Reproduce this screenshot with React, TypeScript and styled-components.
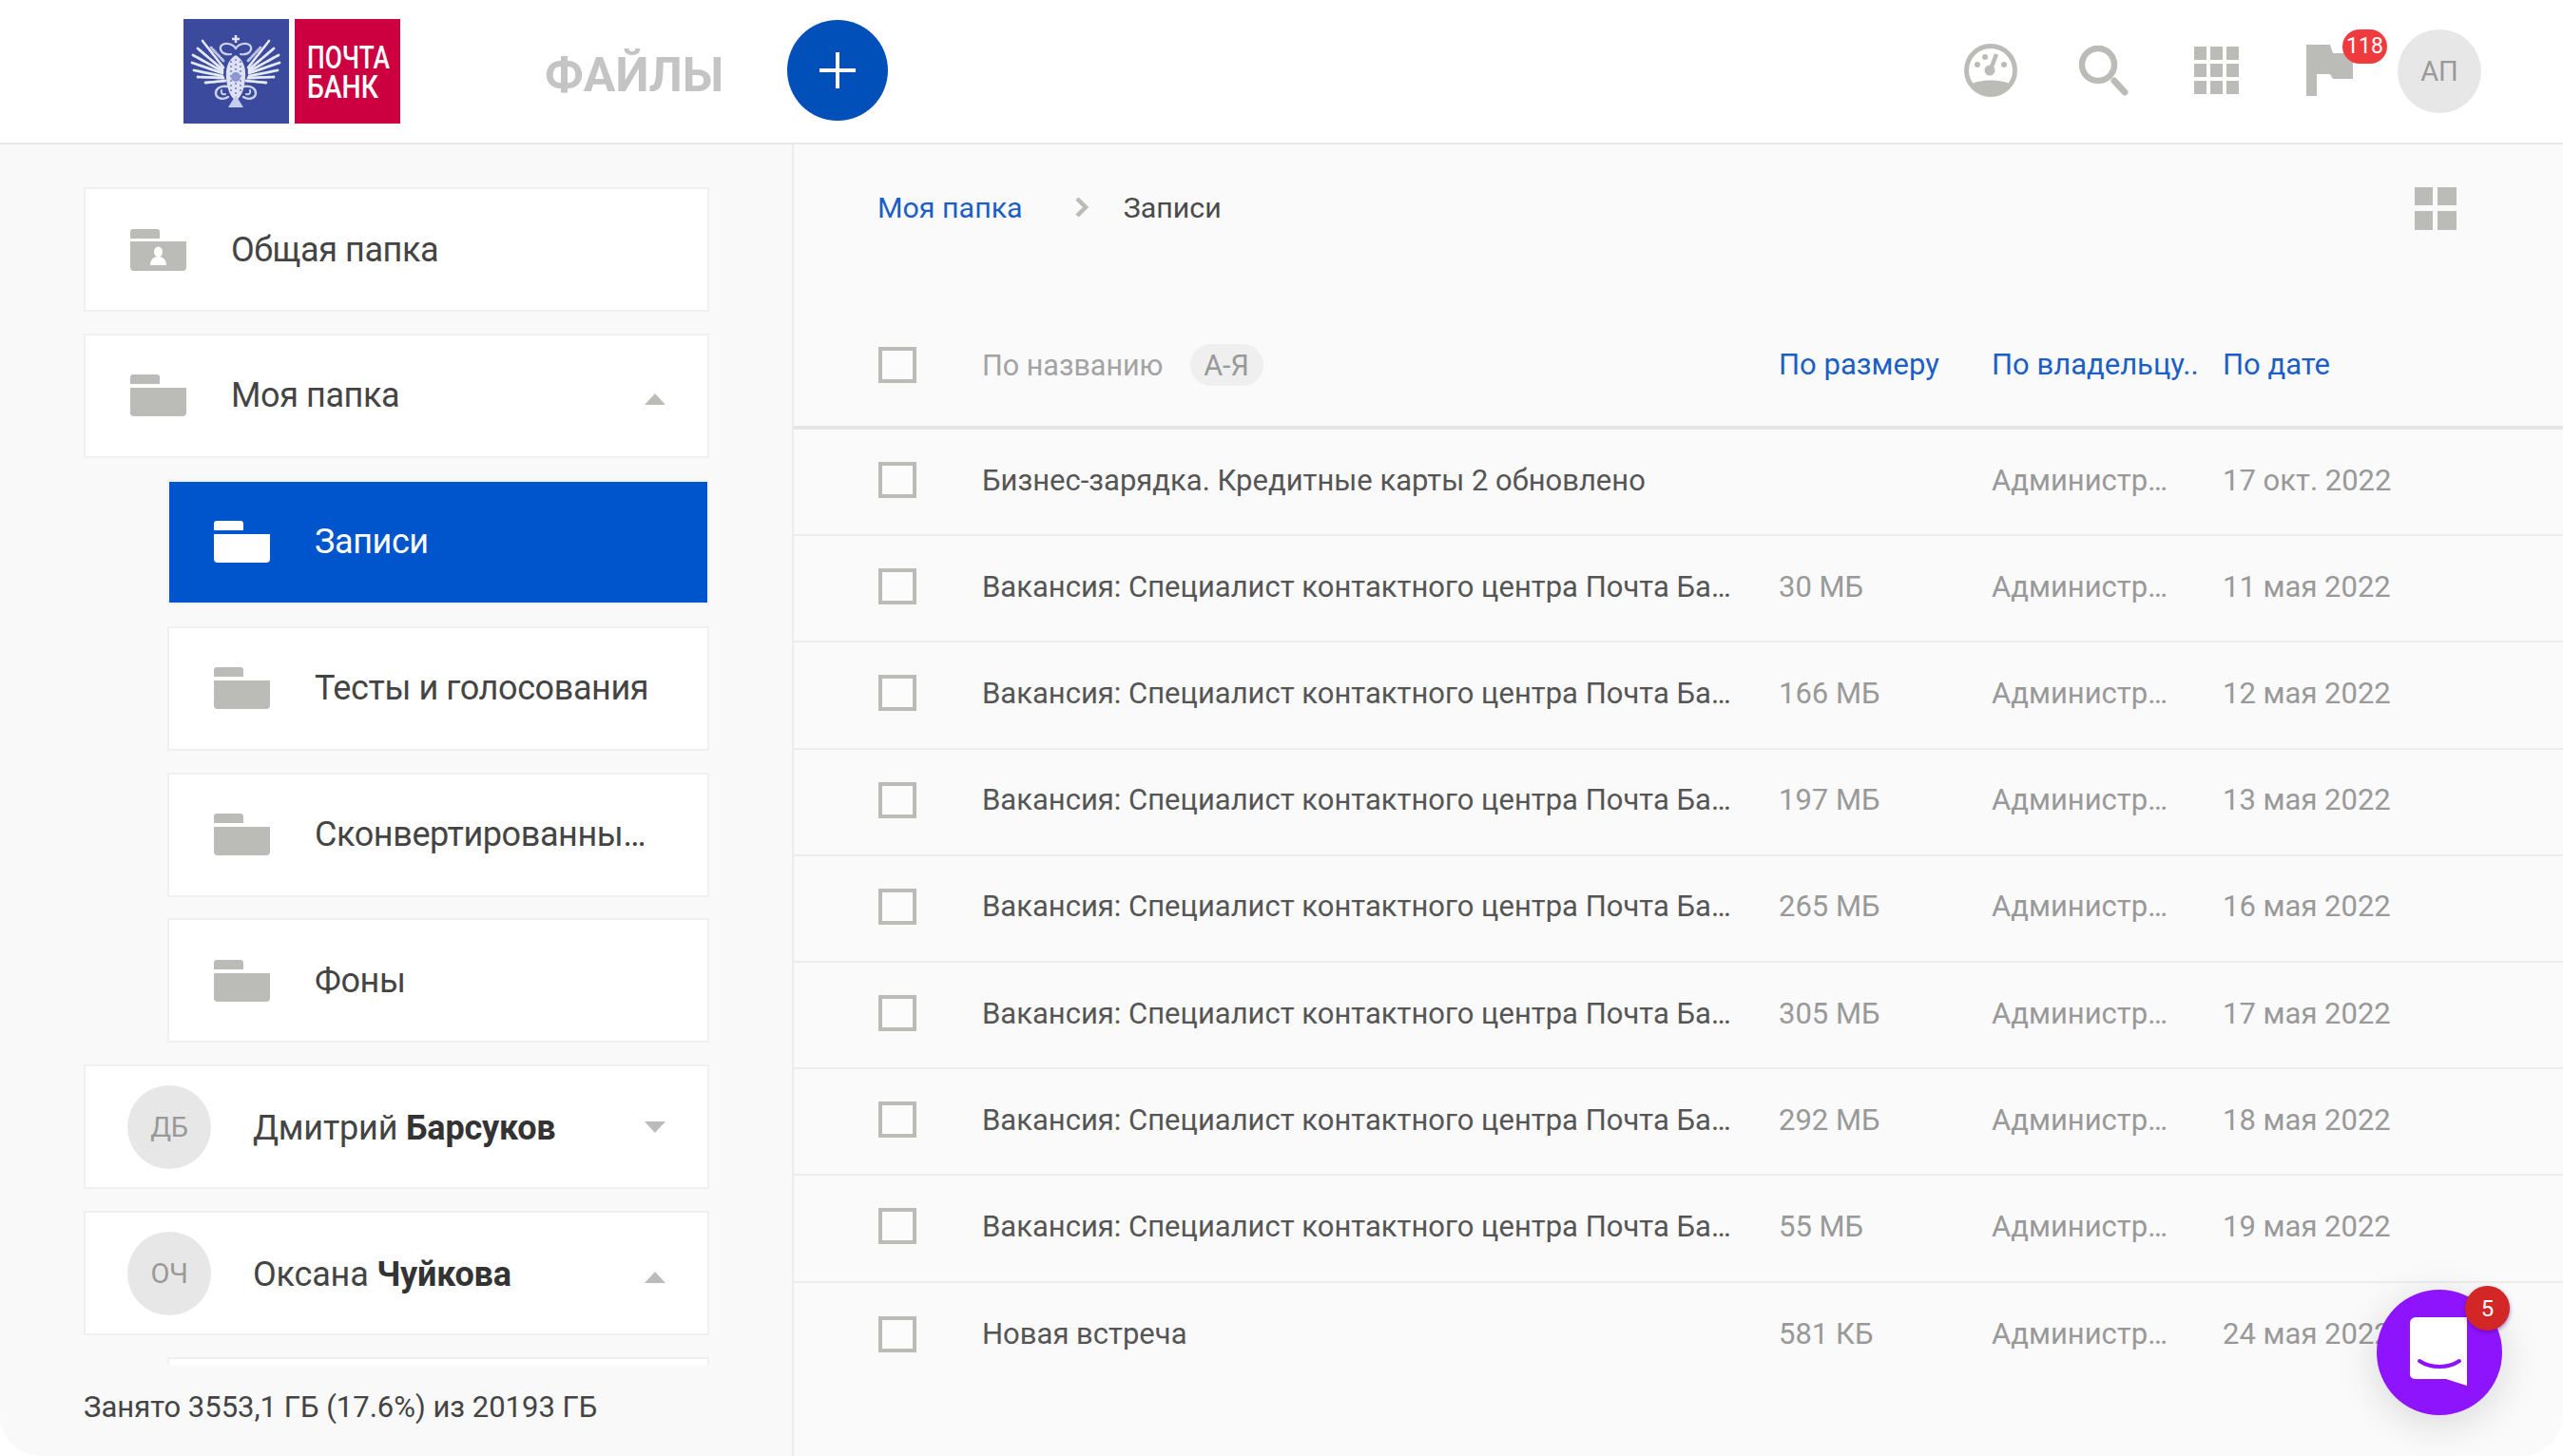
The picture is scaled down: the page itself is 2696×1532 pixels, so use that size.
import React from 'react'
import styled, { createGlobalStyle } from 'styled-components'

const GlobalStyle = createGlobalStyle`
  html, body {
    margin: 0;
    padding: 0;
    background: #fff;
  }
  * {
    box-sizing: border-box;
  }
`

const Frame = styled.div`
  position: relative;
  width: 2696px;
  height: 1532px;
  display: flex;
  flex-direction: column;
  overflow: hidden;
  background: #fafafa;
  border-radius: 0 0 44px 44px;
  font-family: Roboto, 'Liberation Sans', sans-serif;
  color: #444;
`

/* top bar */
const Header = styled.header`
  flex: none;
  height: 152px;
  display: flex;
  align-items: center;
  padding-left: 193px;
  padding-right: 86px;
  background: #fff;
  border-bottom: 2px solid #e8e8e8;
`

const Title = styled.h1`
  margin: 8px 0 0 152px;
  font-size: 50px;
  font-weight: 700;
  line-height: 60px;
  color: #c4c4c4;
`

const AddButton = styled.button`
  width: 106px;
  height: 106px;
  margin: -3px 0 0 67px;
  padding: 0;
  border: 0;
  border-radius: 50%;
  background: #014fb8;
  display: flex;
  align-items: center;
  justify-content: center;
`

const HeaderActions = styled.div`
  margin-left: auto;
  display: flex;
  align-items: center;
`

const IconSlot = styled.div`
  position: relative;
  width: 119px;
  height: 60px;
  margin-top: -3px;
  display: flex;
  align-items: center;
  justify-content: center;
`

const FlagBadge = styled.span`
  position: absolute;
  top: -13px;
  left: 73px;
  width: 47px;
  height: 36px;
  border-radius: 18px;
  background: #ef3a3e;
  color: #fff;
  font-size: 23px;
  line-height: 36px;
  text-align: center;
`

const Avatar = styled.div`
  flex: none;
  width: 88px;
  height: 88px;
  border-radius: 50%;
  background: #e7e7e7;
  color: #999;
  font-size: 29px;
  display: flex;
  align-items: center;
  justify-content: center;
`

const TopAvatar = styled(Avatar)`
  margin-left: 12px;
`

/* body */
const Body = styled.div`
  flex: 1;
  min-height: 0;
  display: flex;
`

const Sidebar = styled.aside`
  flex: none;
  width: 835px;
  display: flex;
  flex-direction: column;
  background: #f9f9f9;
  border-right: 2px solid #ececec;
`

const TreeScroll = styled.div`
  height: 1284px;
  flex: none;
  overflow: hidden;
  padding: 45px 87px 0 88px;
`

const Card = styled.div<{ $nested?: boolean; $active?: boolean }>`
  height: 131px;
  margin: 0 0 22.9px ${(p) => (p.$nested ? 88 : 0)}px;
  padding-left: 47px;
  padding-right: ${(p) => (p.$nested ? 48 : 44)}px;
  display: flex;
  align-items: center;
  background: ${(p) => (p.$active ? '#0055cc' : '#fff')};
  border: 2px solid #f0f0f0;
  color: ${(p) => (p.$active ? '#fff' : '#444')};
  font-size: 36px;
  letter-spacing: -0.4px;
`

const PersonCard = styled(Card)`
  padding-left: 44px;
`

const CardLabel = styled.span`
  flex: 1;
  min-width: 0;
  margin-left: 47px;
  white-space: nowrap;
  overflow: hidden;
  text-overflow: ellipsis;
`

const PersonName = styled(CardLabel)`
  margin-left: 44px;
  margin-top: 3px;
  letter-spacing: -0.2px;
  b {
    font-weight: 700;
    color: #333;
  }
`

const Arrow = styled.span<{ $up?: boolean }>`
  flex: none;
  width: 0;
  height: 0;
  margin-top: ${(p) => (p.$up ? 8 : 0)}px;
  border-left: 11px solid transparent;
  border-right: 11px solid transparent;
  ${(p) => (p.$up ? 'border-bottom: 12px solid #bbbcb7;' : 'border-top: 12px solid #bbbcb7;')}
`

const Usage = styled.div`
  flex: 1;
  padding-left: 88px;
  display: flex;
  align-items: center;
  margin-top: -7px;
  font-size: 31px;
  color: #444;
`

const Main = styled.main`
  flex: 1;
  min-width: 0;
  display: flex;
  flex-direction: column;
`

const Crumbs = styled.nav`
  flex: none;
  height: 168px;
  padding: 45px 112px 78px 88px;
  display: flex;
  align-items: center;
  font-size: 30.4px;
`

const CrumbLink = styled.a`
  margin-top: -3px;
  color: #1b5fc6;
`

const CrumbCurrent = styled.span`
  margin-top: -3px;
  color: #4a4a4a;
`

const CrumbChevron = styled.svg`
  margin: -3px 37px 0 54px;
`

const ViewToggle = styled.svg`
  margin-left: auto;
`

const columns = '110px 838px 224px 243px 1fr'

const SortBar = styled.div`
  flex: none;
  height: 132px;
  padding-left: 88px;
  display: grid;
  grid-template-columns: ${columns};
  align-items: center;
  border-bottom: 4px solid #e6e6e6;
  font-size: 31px;
`

const Check = styled.span`
  display: block;
  width: 40px;
  height: 38px;
  margin-left: 1px;
  background: #fcfcfc;
  border: 4px solid #bbbcb7;
`

const SortName = styled.div`
  display: flex;
  align-items: center;
  font-size: 30.5px;
  color: #a3a3a3;
`

const SortPill = styled.span`
  margin-left: 28px;
  width: 77px;
  height: 44px;
  border-radius: 22px;
  background: #efefef;
  color: #999;
  display: flex;
  align-items: center;
  justify-content: center;
`

const SortLink = styled.a`
  margin-top: -2px;
  color: #1b5fc6;
  white-space: nowrap;
`

const Row = styled.div`
  flex: none;
  height: 112.2px;
  padding-left: 88px;
  padding-bottom: 4px;
  display: grid;
  grid-template-columns: ${columns};
  align-items: center;
  border-bottom: 2px solid #ececec;
  font-size: 31px;
  &:last-child {
    border-bottom: 0;
  }
`

const NameCell = styled.div`
  max-width: 790px;
  color: #555;
  white-space: nowrap;
  overflow: hidden;
  text-overflow: ellipsis;
`

const MetaCell = styled.div<{ $width?: number }>`
  ${(p) => (p.$width ? `max-width: ${p.$width}px;` : '')}
  color: #999;
  white-space: nowrap;
  overflow: hidden;
  text-overflow: ellipsis;
`

/* chat launcher */
const Chat = styled.div`
  position: absolute;
  right: 64px;
  bottom: 43px;
  width: 132px;
  height: 132px;
  border-radius: 50%;
  background: #8f14fe;
  box-shadow: 0 8px 44px rgba(0, 0, 0, 0.14);
  display: flex;
  align-items: center;
  justify-content: center;
`

const ChatBadge = styled.span`
  position: absolute;
  top: -4px;
  right: -8px;
  width: 47px;
  height: 47px;
  border-radius: 50%;
  background: #d32626;
  box-shadow: 0 2px 4px rgba(80, 0, 160, 0.5);
  color: #fff;
  font-size: 24px;
  display: flex;
  align-items: center;
  justify-content: center;
`

const GRAY = '#bbbcb7'

const FolderIcon = ({ color = GRAY }: { color?: string }) => (
  <svg width="59" height="44" viewBox="0 0 59 44">
    <path d="M0 3a3 3 0 0 1 3-3h25a3 3 0 0 1 3 3v7H0z" fill={color} />
    <path d="M0 14h59v26a4 4 0 0 1-4 4H4a4 4 0 0 1-4-4z" fill={color} />
  </svg>
)

const SharedFolderIcon = () => (
  <svg width="59" height="44" viewBox="0 0 59 44">
    <path d="M0 3a3 3 0 0 1 3-3h25a3 3 0 0 1 3 3v7H0z" fill={GRAY} />
    <path d="M0 13h59v27a4 4 0 0 1-4 4H4a4 4 0 0 1-4-4z" fill={GRAY} />
    <ellipse cx="29.5" cy="24" rx="4.5" ry="5.5" fill="#fff" />
    <path d="M21 38c0-6 4-9 8.500-9s8.500 3 8.500 9z" fill="#fff" />
  </svg>
)

// half of the eagle, the other half is mirrored
const EagleHalf = () => (
  <g stroke="#e6e9f8" strokeLinecap="round" fill="none">
    <path d="M42 51L20 23" strokeWidth="2.600" strokeDasharray="7 1.500" />
    <path d="M41 53L15 31" strokeWidth="2.800" strokeDasharray="8 1.500" />
    <path d="M41 55L10 38" strokeWidth="2.800" strokeDasharray="9 1.500" />
    <path d="M41 57L9 46" strokeWidth="2.800" strokeDasharray="9 1.500" />
    <path d="M41 60L11 54" strokeWidth="2.800" strokeDasharray="8 1.500" />
    <path d="M42 62L15 61" strokeWidth="2.800" strokeDasharray="7 1.500" />
    <path d="M44 65L23 67" strokeWidth="2.800" strokeDasharray="6 1.500" />
    <path d="M42 44L29 30" strokeWidth="3" stroke="#b9c0e4" strokeDasharray="4 2" />
    <path d="M46 71c-7-1-12 2-12 7s7 8 13 4" strokeWidth="2.400" stroke="#cdd2ee" />
    <path d="M40 75c-1 3 1 5 4 4" strokeWidth="2" stroke="#cdd2ee" />
    <path d="M50 37c-5 1-10-1-11-5s3-7 8-6 7 3 8 5" strokeWidth="2.200" stroke="#cdd2ee" />
  </g>
)

const Logo = () => (
  <svg width="228" height="110" viewBox="0 0 228 110">
    <rect width="111" height="110" fill="#3c4a9e" />
    <rect x="117" width="111" height="110" fill="#cc0040" />
    <EagleHalf />
    <g transform="translate(110 0) scale(-1 1)">
      <EagleHalf />
    </g>
    <path d="M55 38c7 4 11 12 10 24s-4 20-10 24c-6-4-9-12-10-24s3-20 10-24z" fill="#dde1f4" />
    <g stroke="#6f79bd" strokeWidth="1.500" strokeDasharray="2 3">
      <path d="M50 44v34M55 42v40M60 44v34" />
    </g>
    <path d="M55 80l-8 13h16z" fill="#c6cceb" />
    <path d="M55 17v8M51 21h8" stroke="#dfe3f5" strokeWidth="2.500" />
    <circle cx="55" cy="61" r="5" fill="#8f97cf" />
    <text fontFamily="Roboto, sans-serif" fontWeight="500" fontSize="33" fill="#fff">
      <tspan x="130" y="52" textLength="87" lengthAdjust="spacingAndGlyphs">ПОЧТА</tspan>
      <tspan x="130" y="83" textLength="75" lengthAdjust="spacingAndGlyphs">БАНК</tspan>
    </text>
  </svg>
)

const GaugeIcon = () => (
  <svg width="56" height="56" viewBox="0 0 56 56">
    <circle cx="28" cy="28" r="25.500" fill="none" stroke={GRAY} strokeWidth="5" />
    <path d="M7 43c7-6 35-6 42 0a26 26 0 0 1-42 0z" fill={GRAY} />
    <path d="M34 11L28 27" stroke={GRAY} strokeWidth="4.500" />
    <circle cx="27" cy="28" r="5.500" fill={GRAY} />
    <circle cx="14" cy="22" r="3" fill={GRAY} />
    <circle cx="22" cy="14" r="3" fill={GRAY} />
    <circle cx="42" cy="22" r="3" fill={GRAY} />
  </svg>
)

const SearchIcon = () => (
  <svg width="52" height="54" viewBox="0 0 52 54">
    <circle cx="20" cy="21" r="17" fill="none" stroke={GRAY} strokeWidth="6.500" />
    <path d="M37 38l11 12" stroke={GRAY} strokeWidth="7" strokeLinecap="round" />
  </svg>
)

const AppsIcon = () => (
  <svg width="47" height="50" viewBox="0 0 47 50" fill={GRAY}>
    {[0, 18, 36].map((y) =>
      [0, 17, 34].map((x) => <rect key={`${x}-${y}`} x={x} y={y} width="13" height="14" />)
    )}
  </svg>
)

const FlagIcon = () => (
  <svg width="49" height="54" viewBox="0 0 49 54">
    <path d="M0 0h25l3 9h21v27H28l-3-5H11v23H0z" fill={GRAY} />
  </svg>
)

const files = [
  ['Бизнес-зарядка. Кредитные карты 2 обновлено', '', '17 окт. 2022'],
  ['Вакансия: Специалист контактного центра Почта Банка', '30 МБ', '11 мая 2022'],
  ['Вакансия: Специалист контактного центра Почта Банка', '166 МБ', '12 мая 2022'],
  ['Вакансия: Специалист контактного центра Почта Банка', '197 МБ', '13 мая 2022'],
  ['Вакансия: Специалист контактного центра Почта Банка', '265 МБ', '16 мая 2022'],
  ['Вакансия: Специалист контактного центра Почта Банка', '305 МБ', '17 мая 2022'],
  ['Вакансия: Специалист контактного центра Почта Банка', '292 МБ', '18 мая 2022'],
  ['Вакансия: Специалист контактного центра Почта Банка', '55 МБ', '19 мая 2022'],
  ['Новая встреча', '581 КБ', '24 мая 2022'],
]

const App = () => (
  <>
    <GlobalStyle />
    <Frame>
      <Header>
        <Logo />
        <Title>ФАЙЛЫ</Title>
        <AddButton>
          <svg width="38" height="38" viewBox="0 0 38 38">
            <path d="M19 0v38M0 19h38" stroke="#fff" strokeWidth="4" />
          </svg>
        </AddButton>
        <HeaderActions>
          <IconSlot><GaugeIcon /></IconSlot>
          <IconSlot><SearchIcon /></IconSlot>
          <IconSlot><AppsIcon /></IconSlot>
          <IconSlot>
            <FlagIcon />
            <FlagBadge>118</FlagBadge>
          </IconSlot>
          <TopAvatar>АП</TopAvatar>
        </HeaderActions>
      </Header>
      <Body>
        <Sidebar>
          <TreeScroll>
            <Card>
              <SharedFolderIcon />
              <CardLabel>Общая папка</CardLabel>
            </Card>
            <Card>
              <FolderIcon />
              <CardLabel>Моя папка</CardLabel>
              <Arrow $up />
            </Card>
            <Card $nested $active>
              <FolderIcon color="#fff" />
              <CardLabel>Записи</CardLabel>
            </Card>
            <Card $nested>
              <FolderIcon />
              <CardLabel>Тесты и голосования</CardLabel>
            </Card>
            <Card $nested>
              <FolderIcon />
              <CardLabel>Сконвертированные файлы</CardLabel>
            </Card>
            <Card $nested>
              <FolderIcon />
              <CardLabel>Фоны</CardLabel>
            </Card>
            <PersonCard>
              <Avatar>ДБ</Avatar>
              <PersonName>Дмитрий <b>Барсуков</b></PersonName>
              <Arrow />
            </PersonCard>
            <PersonCard>
              <Avatar>ОЧ</Avatar>
              <PersonName>Оксана <b>Чуйкова</b></PersonName>
              <Arrow $up />
            </PersonCard>
            <Card $nested />
          </TreeScroll>
          <Usage>Занято 3553,1 ГБ (17.6%) из 20193 ГБ</Usage>
        </Sidebar>
        <Main>
          <Crumbs>
            <CrumbLink>Моя папка</CrumbLink>
            <CrumbChevron width="15" height="22" viewBox="0 0 15 22">
              <path d="M3 2l9 9-9 9" fill="none" stroke={GRAY} strokeWidth="4.500" />
            </CrumbChevron>
            <CrumbCurrent>Записи</CrumbCurrent>
            <ViewToggle width="44" height="45" viewBox="0 0 44 45" fill={GRAY}>
              <rect width="19" height="19" />
              <rect x="24" width="20" height="19" />
              <rect y="25" width="19" height="20" />
              <rect x="24" y="25" width="20" height="20" />
            </ViewToggle>
          </Crumbs>
          <SortBar>
            <Check />
            <SortName>
              По названию
              <SortPill>А-Я</SortPill>
            </SortName>
            <SortLink>По размеру</SortLink>
            <SortLink>По владельцу..</SortLink>
            <SortLink>По дате</SortLink>
          </SortBar>
          {files.map(([name, size, date], i) => (
            <Row key={i}>
              <Check />
              <NameCell>{name}</NameCell>
              <MetaCell>{size}</MetaCell>
              <MetaCell $width={200}>Администратор</MetaCell>
              <MetaCell>{date}</MetaCell>
            </Row>
          ))}
        </Main>
      </Body>
      <Chat>
        <svg width="62" height="74" viewBox="0 0 62 74">
          <path d="M6 0h54v72L38 65H5a5 5 0 0 1-5-5V6a6 6 0 0 1 6-6z" fill="#fff" />
          <path d="M10 46c12 8 30 8 42 0" fill="none" stroke="#8f14fe" strokeWidth="4" strokeLinecap="round" />
        </svg>
        <ChatBadge>5</ChatBadge>
      </Chat>
    </Frame>
  </>
)

export default App
